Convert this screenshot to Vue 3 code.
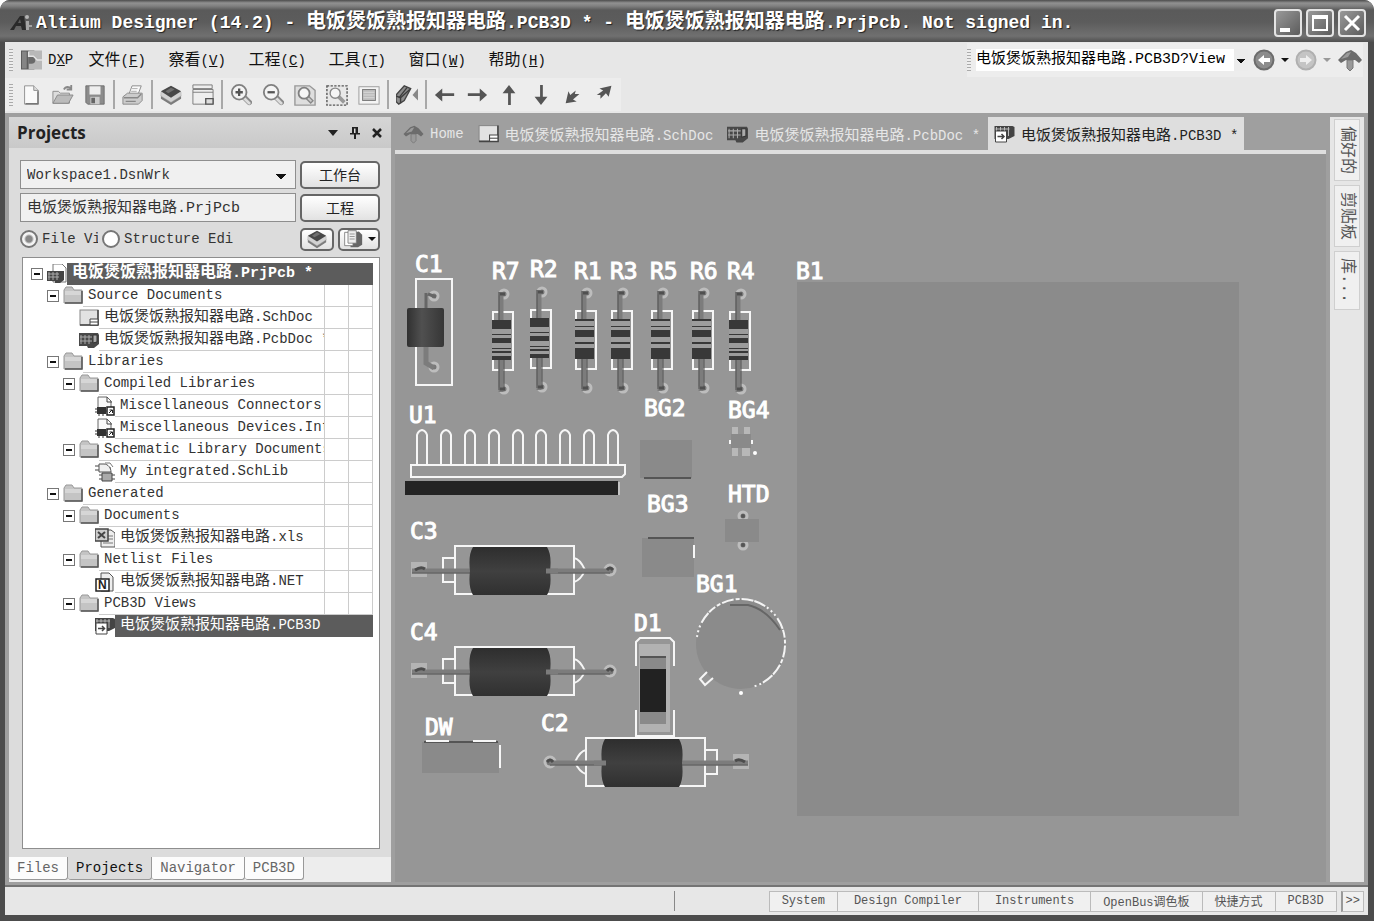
<template>
  <div class="app-window">
    <svg class="symbols" aria-hidden="true">
      <symbol id="i-new" viewBox="0 0 24 24"><path d="M5 2h10l5 5v15H5z" fill="#fafafa" stroke="#8c8c8c" /><path d="M15 2v5h5" fill="#ddd" stroke="#8c8c8c" /><path d="M19.500 8v13.500H6" stroke="#777" fill="none" stroke-width="1.500" /></symbol>
      <symbol id="i-open" viewBox="0 0 24 24"><path d="M1 21V8h6l2 2h10v11z" fill="#ddd" stroke="#8a8a8a" /><path d="M1 21l5-9h17l-5 9z" fill="#bbb" stroke="#888" /><path d="M13 6c2-4 6-3 8-1M21 1v5h-5" fill="none" stroke="#888" stroke-width="2" /></symbol>
      <symbol id="i-save" viewBox="0 0 24 24"><path d="M2 2h20v20H4l-2-2z" fill="#8c8c8c" stroke="#6e6e6e" /><rect x="6" y="2.500" width="12" height="9" fill="#eee" /><rect x="7" y="14" width="10" height="8" fill="#ccc" /><rect x="8" y="15" width="4" height="6" fill="#666" /></symbol>
      <symbol id="i-print" viewBox="0 0 24 24"><path d="M8 10l3-8h10l-3 8" fill="#fafafa" stroke="#888" /><path d="M1 14l5-4h16v8l-4 4H1z" fill="#ccc" stroke="#888" /><path d="M2 15h15l4-4M4 19h11" fill="none" stroke="#888" stroke-width="1.500" /><path d="M11 5h6M10 8h6" stroke="#aaa" /></symbol>
      <symbol id="i-layers" viewBox="0 0 24 24"><path d="M1 12l11 7 11-7v4l-11 7-11-7z" fill="#7c7c7c" /><path d="M1 9l11-6 11 6v4l-11 7-11-7z" fill="#d2d2d2" stroke="#aaa" stroke-width=".5" /><path d="M1 8l11-6 11 6-11 7z" fill="#484848" /><path d="M6 8l6-4 4 2-7 4z" fill="#707070" /></symbol>
      <symbol id="i-sheet" viewBox="0 0 24 24"><path d="M1 1h21v4H1zM1 6h22v16H1z" fill="#eee" stroke="#777" /><path d="M1 9h22" stroke="#777" /><path d="M15 16h8v6h-8z" fill="#ddd" stroke="#555" stroke-width="1.500" /></symbol>
      <symbol id="i-zoomin" viewBox="0 0 24 24"><path d="M15 14l6 6" stroke="#8a8a8a" stroke-width="6" stroke-linecap="round" /><path d="M15 15l6 6" stroke="#ddd" stroke-width="3" stroke-linecap="round" /><circle cx="10" cy="9" r="8" fill="#f4f4f4" stroke="#808080" stroke-width="2" /><path d="M6 9h8M10 5v8" stroke="#555" stroke-width="2.500" /></symbol>
      <symbol id="i-zoomout" viewBox="0 0 24 24"><path d="M15 14l6 6" stroke="#8a8a8a" stroke-width="6" stroke-linecap="round" /><path d="M15 15l6 6" stroke="#ddd" stroke-width="3" stroke-linecap="round" /><circle cx="10" cy="9" r="8" fill="#f4f4f4" stroke="#808080" stroke-width="2" /><path d="M6 9h8" stroke="#555" stroke-width="2.500" /></symbol>
      <symbol id="i-zoomdoc" viewBox="0 0 24 24"><path d="M1 2h16l6 5v16H1z" fill="#dedede" stroke="#999" stroke-width="1.500" /><path d="M14 14l6 6" stroke="#888" stroke-width="5" /><path d="M15 15l4 4" stroke="#ccc" stroke-width="2" /><circle cx="11" cy="10" r="6" fill="#f6f6f6" stroke="#808080" stroke-width="2" /></symbol>
      <symbol id="i-zoomarea" viewBox="0 0 24 24"><rect x="1" y="2" width="22" height="21" fill="#e8e8e8" stroke="#555" stroke-width="1.500" stroke-dasharray="2.500 1.500" /><path d="M13 13l7 7" stroke="#999" stroke-width="4" /><circle cx="10" cy="10" r="5.500" fill="#f6f6f6" stroke="#888" stroke-width="1.500" /></symbol>
      <symbol id="i-fit" viewBox="0 0 24 24"><rect x="1" y="3" width="22" height="19" fill="#f4f4f4" stroke="#999" /><rect x="5" y="6" width="14" height="12" fill="#bbb" stroke="#777" /><path d="M6 9h12M6 12h12M6 15h12" stroke="#ddd" /></symbol>
      <symbol id="i-flip" viewBox="0 0 24 24"><path d="M0 12L9 2l7 3-7 13-6 4-3-3z" fill="#8c8c8c" stroke="#444" stroke-width="1.500" /><path d="M4 14l8-10M0 13l5 2v6M5 15l10-9" fill="none" stroke="#3c3c3c" stroke-width="1.500" /><path d="M24 5v13l-6-6z" fill="#888" /></symbol>
      <symbol id="i-left" viewBox="0 0 24 24"><path d="M1 12l8-7v5h13v3H9v6z" fill="#555" /></symbol>
      <symbol id="i-right" viewBox="0 0 24 24"><path d="M23 12l-8-7v5H2v3h13v6z" fill="#555" /></symbol>
      <symbol id="i-up" viewBox="0 0 24 24"><path d="M12 1l7 9h-5v13h-3V10H5z" fill="#555" /></symbol>
      <symbol id="i-down" viewBox="0 0 24 24"><path d="M12 23l7-9h-5V1h-3v13H5z" fill="#555" /></symbol>
      <symbol id="i-sw" viewBox="0 0 24 24"><path d="M4 21l3-13 2 4 6-5-1 4h5l-7 6 4 2z" fill="#555" /></symbol>
      <symbol id="i-ne" viewBox="0 0 24 24"><path d="M19 2l-3 12-3-4-6 6v-4H3l7-5-4-2z" fill="#555" /></symbol>
      <symbol id="i-home" viewBox="0 0 24 24"><path d="M9 12h6v8l-3 3-3-3z" fill="#999" stroke="#777" /><path d="M0 12l8-8 5-2 5 3 6 7-3 3-4-3H8l-5 3z" fill="#6c6c6c" /><path d="M3 11l6-6 4-1-3 5z" fill="#9a9a9a" /></symbol>
      <symbol id="i-folder" viewBox="0 0 20 20"><path d="M1 4l2-3h6l2 3h8v13H1z" fill="#c4c4c4" stroke="#999" /><path d="M19 5v12H2" fill="none" stroke="#555" stroke-width="1.500" /><path d="M2 5h16v4H2z" fill="#d6d6d6" /></symbol>
      <symbol id="i-sch" viewBox="0 0 20 18"><rect x="1" y="1" width="18" height="15" fill="#e2e2e2" stroke="#888" /><path d="M19 1v15H1" fill="none" stroke="#444" stroke-width="1.500" /><path d="M11 10h8v6h-8z" fill="#fff" stroke="#444" /><path d="M11 13h8" stroke="#444" /></symbol>
      <symbol id="i-pcb" viewBox="0 0 20 18"><path d="M0 2h19l1 2v9l-5 4H9l-1-2H0z" fill="#484848" /><path d="M2 4v9M6 4v9M10 4v9M1 6h12M1 10h12" stroke="#aaa" /><path d="M14 4v8l4-1V4z" fill="#aaa" stroke="#333" /></symbol>
      <symbol id="i-prj" viewBox="0 0 20 20"><path d="M6 0h9l4 4v14H6z" fill="#fff" stroke="#777" /><path d="M0 7h17v9l-4 3H8v-2H0z" fill="#444" /><path d="M2 8v8M6 8v8M10 8v8M1 10h11M1 13h11" stroke="#aaa" /></symbol>
      <symbol id="i-lib" viewBox="0 0 20 20"><path d="M3 1h9l4 4v10H3z" fill="#fafafa" stroke="#666" /><path d="M12 1v5h5" fill="none" stroke="#444" /><path d="M2 11h9v7H2z" fill="#333" /><path d="M0 13h2M0 16h2M4 20v-2M8 20v-2" stroke="#333" /><path d="M12 11h7v8h-7z" fill="#fff" stroke="#222" stroke-width="1.500" /><path d="M14 17l3-3m-2.500 0h3v3" stroke="#222" fill="none" /></symbol>
      <symbol id="i-schlib" viewBox="0 0 20 20"><path d="M0 4h4M0 8h4M12 6h4" stroke="#444" /><path d="M4 2h5c4 0 7 4 7 8H4z" fill="#f0f0f0" stroke="#555" /><path d="M10 1h5l3 4" fill="none" stroke="#777" /><path d="M7 11h10v8H7z" fill="#aaa" stroke="#444" /><path d="M4 13h3M4 17h3M17 13h3M17 17h3" stroke="#444" /></symbol>
      <symbol id="i-xls" viewBox="0 0 20 20"><path d="M6 2h10l4 3v14H6z" fill="#eee" stroke="#555" /><path d="M13 8h5M13 11h5M8 15h10" stroke="#777" /><rect x="0" y="1" width="13" height="12" fill="#ccc" stroke="#444" stroke-width="1.500" /><path d="M3 4l7 6M10 4l-7 6" stroke="#444" stroke-width="2" /></symbol>
      <symbol id="i-net" viewBox="0 0 20 20"><path d="M6 1h8l4 4v14H6z" fill="#eee" stroke="#555" /><rect x="1" y="7" width="13" height="12" fill="#fff" stroke="#222" stroke-width="1.500" /><text x="3" y="17" font-size="12" font-weight="bold" font-family="Liberation Sans, sans-serif" fill="#222">N</text></symbol>
      <symbol id="i-pcb3d" viewBox="0 0 20 20"><path d="M0 2h18l2 1v9l-6 3H0z" fill="#444" /><path d="M2 3v5M6 3v5M10 3v5M14 3v9M1 5h14" stroke="#bbb" /><path d="M1 7h11v11H1z" fill="#fff" stroke="#444" /><path d="M3 12.500h6M7 10l2.500 2.500L7 15" fill="none" stroke="#444" stroke-width="1.500" /></symbol>
      <symbol id="i-copy" viewBox="0 0 24 24"><path d="M9 5l10-2 4 4v12l-5 3H9z" fill="#666" /><path d="M2 4h10v16H2z" fill="#fff" stroke="#777" /><path d="M6 2h10v15H6z" fill="#eee" stroke="#777" /><path d="M8 6h6M8 9h6M8 12h6" stroke="#888" /></symbol>
    </svg>

    <header class="title-bar">
      <svg class="logo" viewBox="0 0 22 20" aria-hidden="true">
        <path d="M0 17L10 3h4l2 14h-4l-1-4H6l-2 4zM8 10h3l-1-4z" fill="#2a2a2a" fill-rule="evenodd" />
        <circle cx="17" cy="4" r="2" fill="#b4b4b4" />
        <path d="M16 8h3v9h-3zM19 12h3v2h-3z" fill="#a4a4a4" />
      </svg>
      <h1>Altium Designer (14.2) - <span class="cjk">{{ name }}</span>.PCB3D * - <span class="cjk">{{ name }}</span>.PrjPcb. Not signed in.</h1>
      <button class="win-btn" aria-label="Minimize"><svg viewBox="0 0 24 24"><path d="M4 17h10v4H4z" fill="#fff" /></svg></button>
      <button class="win-btn" aria-label="Maximize"><svg viewBox="0 0 24 24"><path d="M4 4h16v16H4zM6 8v10h12V8z" fill="#fff" fill-rule="evenodd" /></svg></button>
      <button class="win-btn" aria-label="Close"><svg viewBox="0 0 24 24"><path d="M5 5l14 14M19 5L5 19" stroke="#fff" stroke-width="3" /></svg></button>
    </header>

    <nav class="menu-bar">
      <span class="grip"></span>
      <button class="dxp">
        <svg viewBox="0 0 22 22" aria-hidden="true"><path d="M0 1h14v20H0z" fill="#5c5c5c" /><path d="M8 1h14v20H8z" fill="#b8b8b8" /><path d="M8 7h3a4 4 0 010 8H8z" fill="#6a6a6a" /><path d="M8 2v5h5l4 4h5" fill="none" stroke="#e4e4e4" stroke-width="1.500" /><path d="M1 2h5v18H1z" fill="#858585" /></svg>
        <span>D<u>X</u>P</span>
      </button>
      <button v-for="m in menus" :key="m.key" class="menu-item"><span class="cjk">{{ m.label }}</span>(<u>{{ m.key }}</u>)</button>
      <div class="address">
        <span class="grip"></span>
        <select aria-label="Address">
          <option>{{ name }}.PCB3D?View</option>
        </select>
        <button class="round" aria-label="Back"><svg viewBox="0 0 22 22"><circle cx="11" cy="11" r="9.500" fill="#8c8c8c" stroke="#6c6c6c" stroke-width="2" /><path d="M5 11l6-5v3h6v4h-6v3z" fill="#fff" /></svg></button>
        <button class="drop" aria-label="Back history"></button>
        <button class="round" aria-label="Forward"><svg viewBox="0 0 22 22"><circle cx="11" cy="11" r="9.500" fill="#c4c4c4" stroke="#b0b0b0" stroke-width="2" /><path d="M17 11l-6-5v3H5v4h6v3z" fill="#eee" /></svg></button>
        <button class="drop faded" aria-label="Forward history"></button>
        <button class="home" aria-label="Home page"><svg><use href="#i-home" /></svg></button>
      </div>
    </nav>

    <div class="tool-row">
      <div class="tool-bar">
        <span class="grip"></span>
        <template v-for="(group, i) in tools" :key="i">
          <span v-if="i" class="sep"></span>
          <button v-for="t in group" :key="t" class="tool" :aria-label="t"><svg><use :href="'#i-' + t" /></svg></button>
        </template>
      </div>
    </div>

    <main class="workspace">
      <aside class="panel">
        <header class="panel-head">
          <h2>Projects</h2>
          <button aria-label="Panel menu"><svg viewBox="0 0 12 12"><path d="M1 3h10L6 9z" fill="#222" /></svg></button>
          <button aria-label="Pin"><svg viewBox="0 0 12 12"><path d="M3 0h6v6h2v1.500H7V12H5V7.500H1V6h2z" fill="#222" /><path d="M5 1.500h1.500V6H5z" fill="#ddd" /></svg></button>
          <button aria-label="Close panel"><svg viewBox="0 0 12 12"><path d="M2 2l8 8M10 2l-8 8" stroke="#222" stroke-width="2.500" /></svg></button>
        </header>
        <div class="panel-body">
          <div class="form-row">
            <select class="field" aria-label="Workspace"><option>Workspace1.DsnWrk</option></select>
            <button class="xp-btn">工作台</button>
          </div>
          <div class="form-row">
            <input class="field project" aria-label="Project" :value="name + '.PrjPcb'" />
            <button class="xp-btn">工程</button>
          </div>
          <div class="form-row view-row">
            <label class="radio first"><input v-model="view" type="radio" name="view" value="file" /><span>File View</span></label>
            <label class="radio"><input v-model="view" type="radio" name="view" value="structure" /><span>Structure Edi</span></label>
            <button class="xp-btn small" aria-label="Layers"><svg><use href="#i-layers" /></svg></button>
            <button class="xp-btn small wide" aria-label="Documents"><svg><use href="#i-copy" /></svg><i class="arrow"></i></button>
          </div>
          <ul class="tree">
            <li v-for="(n, i) in tree" :key="i" :class="['depth-' + n.depth, { selected: n.selected, root: n.depth === 0 }]">
              <button v-if="n.open" class="toggle" aria-label="Collapse"></button>
              <span v-else class="no-toggle"></span>
              <svg class="node-icon"><use :href="'#i-' + n.icon" /></svg>
              <span class="node-text"><span v-if="n.doc" class="cjk">{{ name }}</span>{{ n.text }}</span>
              <span class="cell"></span>
              <span class="cell"></span>
            </li>
          </ul>
        </div>
        <nav class="panel-tabs">
          <button v-for="t in panelTabs" :key="t" :class="{ active: t === 'Projects' }">{{ t }}</button>
        </nav>
      </aside>

      <section class="editor">
        <nav class="doc-tabs">
          <button v-for="t in docTabs" :key="t.text" :class="{ active: t.active }">
            <svg><use :href="'#i-' + t.icon" /></svg>
            <span><span v-if="t.doc" class="cjk">{{ name }}</span>{{ t.text }}</span>
          </button>
        </nav>
        <svg class="board">
          <defs>
            <linearGradient id="can" x1="0" y1="0" x2="0" y2="1">
              <stop offset="0" stop-color="#2e2e2e" /><stop offset=".5" stop-color="#404040" /><stop offset="1" stop-color="#303030" />
            </linearGradient>
            <linearGradient id="canV" x1="0" y1="0" x2="1" y2="0">
              <stop offset="0" stop-color="#303030" /><stop offset=".4" stop-color="#505050" /><stop offset="1" stop-color="#363636" />
            </linearGradient>
          </defs>
          <g transform="translate(-395 -154)">
            <rect x="797" y="282" width="442" height="534" fill="#8b8b8b" />

            <!-- C1 -->
            <rect class="silk" x="416" y="279" width="36" height="106" />
            <circle class="pad" cx="434" cy="296" r="4" /><circle class="pad" cx="434" cy="367" r="4" />
            <path class="lead" d="M426 345v18l8 5" />
            <path d="M436 297l-8-3M426 293v16" stroke="#666" stroke-width="3" />
            <rect x="407" y="308" width="37" height="39" rx="2" fill="url(#canV)" />

            <!-- resistors -->
            <g v-for="r in resistors" :key="r.id" :transform="`translate(${r.x} ${r.y})`">
              <rect class="silk" x="1" y="0" width="20" height="58" />
              <circle class="pad" cx="12" cy="-18" r="4" /><circle class="pad" cx="12" cy="77" r="4" />
              <path class="lead" d="M9-20V8M9 46v34" stroke-width="6" />
              <path d="M7-20V8M7 48v30M12 48v30" stroke="#505050" />
              <path d="M8-18l5 0M8 77l5 0" stroke="#505050" stroke-width="3" />
              <rect x="0" y="8" width="19" height="40" fill="#383838" />
              <g v-if="r.flip" fill="#9c9c9c"><rect y="17" width="19" height="5" /><rect y="23" width="19" height="3" /><rect y="31" width="19" height="5" /><rect y="37" width="19" height="2" /><rect y="41" width="19" height="3" /></g>
              <g v-else fill="#9c9c9c"><rect y="10" width="19" height="5" /><rect y="16" width="19" height="3" /><rect y="26" width="19" height="5" /><rect y="33" width="19" height="4" /></g>
            </g>

            <!-- U1 -->
            <path v-for="x in pins" :key="x" class="silk" :d="`M${x - 5} 465v-30q1-4 5-5q4 1 5 5v30`" />
            <path class="silk" d="M411 465h214v9l-3 3H411z" />
            <rect x="405" y="481" width="213" height="14" fill="#242424" />
            <path d="M619 482v13" stroke="#c4c4c4" stroke-width="2" />

            <!-- axial capacitors -->
            <g v-for="c in caps" :key="c.id" :transform="c.at">
              <rect class="silk" x="0" y="0" width="119" height="48" />
              <path class="silk" d="M0 12h-12v24H0M119 12q6 1 11 12q-4 10-11 12" />
              <rect x="-44" y="16" width="16" height="15" fill="#b4b4b4" />
              <circle class="pad" cx="155" cy="24" r="5" />
              <path class="lead" d="M-43 25H30M90 25h65" />
              <path d="M-43 27H30M90 27h65" stroke="#5c5c5c" />
              <path d="M-40 24q6-4 10-1M152 24q3-4 6 0" fill="none" stroke="#4c4c4c" stroke-width="3" />
              <g :transform="`translate(${c.body} 0)`">
                <path d="M4 1h74q5 8 3 24q2 16-3 24H4q-5-8-3-24q-2-16 3-24z" fill="url(#can)" transform="translate(14 0)" />
                <path class="lead" d="M91 25h12" />
              </g>
            </g>

            <!-- D1 -->
            <path class="silk" d="M636 666v-24l4-4h30l4 4v24M636 710v26h38v-26" />
            <rect x="639" y="644" width="31" height="88" fill="#b2b2b2" />
            <rect x="640" y="656" width="26" height="68" fill="#8a8a8a" />
            <path d="M640 657h26" stroke="#555" stroke-width="2" />
            <rect x="640" y="669" width="26" height="43" fill="#222" />

            <!-- transistors, thermistor and pot -->
            <rect class="chip" x="640" y="440" width="52" height="38" /><path d="M644 478h47" stroke="#555" stroke-width="2" />
            <rect class="chip" x="642" y="538" width="52" height="39" /><path d="M648 538h46" stroke="#555" stroke-width="2" /><path class="silk" d="M694 545v13" />
            <path d="M732 427h6v7h-6zM744 427h6v7h-6zM732 448h6v8h-6zM742 448h8v8h-8z" fill="#b8b8b8" />
            <rect class="chip" x="731" y="434" width="20" height="14" /><path class="silk" d="M730 440v4M752 440v4" />
            <circle cx="755" cy="453" r="2" fill="#fff" />
            <circle class="pad" cx="743" cy="516" r="4" /><circle class="pad" cx="743" cy="545" r="4" />
            <circle cx="743" cy="516" r="2" fill="#555" /><circle cx="743" cy="545" r="2" fill="#555" />
            <rect class="chip" x="725" y="519" width="34" height="23" />
            <circle cx="741" cy="644" r="45" fill="#8b8b8b" />
            <path d="M730 605h18q18 4 32 25" fill="none" stroke="#666" stroke-width="2" />
            <path d="M697 637A44 44 0 01741 599A44 44 0 01785 643A44 44 0 01752 687" fill="none" stroke="#f4f4f4" stroke-width="2" stroke-dasharray="2 3 2 3 2 3 12 1 8 2 4 2 12 2 4 2 12 1 12 2" />
            <path class="silk" d="M707 672l-7 7 5 6 8-7" />
            <circle cx="741" cy="693" r="2" fill="#fff" />
            <rect class="chip" x="422" y="742" width="77" height="31" />
            <path d="M424 742h74" stroke="#555" stroke-width="2" /><path class="silk" d="M426 741h23M473 741h23M500 745v23" />

            <text v-for="l in labels" :key="l.t" :x="l.x" :y="l.y">{{ l.t }}</text>
          </g>
        </svg>
      </section>

      <nav class="side-tabs">
        <button>偏好的</button>
        <button>剪贴板</button>
        <button>库...</button>
      </nav>
    </main>

    <footer class="status-bar">
      <span class="divider"></span>
      <div class="status-btns">
        <button v-for="s in statusItems" :key="s.text" :class="{ wide: s.wide }">{{ s.text }}</button>
      </div>
      <button class="more">&gt;&gt;</button>
    </footer>
  </div>
</template>

<script setup>
import { ref } from 'vue'

const name = '电饭煲饭熟报知器电路'
const view = ref('file')

const menus = [
  { label: '文件', key: 'F' },
  { label: '察看', key: 'V' },
  { label: '工程', key: 'C' },
  { label: '工具', key: 'T' },
  { label: '窗口', key: 'W' },
  { label: '帮助', key: 'H' }
]

const tools = [
  ['new', 'open', 'save'],
  ['print'],
  ['layers', 'sheet'],
  ['zoomin', 'zoomout', 'zoomdoc', 'zoomarea', 'fit'],
  ['flip'],
  ['left', 'right', 'up', 'down', 'sw', 'ne']
]

const panelTabs = ['Files', 'Projects', 'Navigator', 'PCB3D']

const docTabs = [
  { icon: 'home', text: 'Home' },
  { icon: 'sch', doc: true, text: '.SchDoc' },
  { icon: 'pcb', doc: true, text: '.PcbDoc *' },
  { icon: 'pcb3d', doc: true, text: '.PCB3D *', active: true }
]

const tree = [
  { depth: 0, open: true, icon: 'prj', doc: true, text: '.PrjPcb *', selected: true },
  { depth: 1, open: true, icon: 'folder', text: 'Source Documents' },
  { depth: 2, icon: 'sch', doc: true, text: '.SchDoc' },
  { depth: 2, icon: 'pcb', doc: true, text: '.PcbDoc *' },
  { depth: 1, open: true, icon: 'folder', text: 'Libraries' },
  { depth: 2, open: true, icon: 'folder', text: 'Compiled Libraries' },
  { depth: 3, icon: 'lib', text: 'Miscellaneous Connectors.IntLib' },
  { depth: 3, icon: 'lib', text: 'Miscellaneous Devices.IntLib' },
  { depth: 2, open: true, icon: 'folder', text: 'Schematic Library Documents' },
  { depth: 3, icon: 'schlib', text: 'My integrated.SchLib' },
  { depth: 1, open: true, icon: 'folder', text: 'Generated' },
  { depth: 2, open: true, icon: 'folder', text: 'Documents' },
  { depth: 3, icon: 'xls', doc: true, text: '.xls' },
  { depth: 2, open: true, icon: 'folder', text: 'Netlist Files' },
  { depth: 3, icon: 'net', doc: true, text: '.NET' },
  { depth: 2, open: true, icon: 'folder', text: 'PCB3D Views' },
  { depth: 3, icon: 'pcb3d', doc: true, text: '.PCB3D', selected: true }
]

const statusItems = [
  { text: 'System' },
  { text: 'Design Compiler', wide: true },
  { text: 'Instruments', wide: true },
  { text: 'OpenBus调色板' },
  { text: '快捷方式' },
  { text: 'PCB3D' }
]

const resistors = [
  { id: 'R7', x: 492, y: 312, flip: true },
  { id: 'R2', x: 530, y: 310, flip: true },
  { id: 'R1', x: 575, y: 311 },
  { id: 'R3', x: 611, y: 311 },
  { id: 'R5', x: 651, y: 311 },
  { id: 'R6', x: 692, y: 311 },
  { id: 'R4', x: 729, y: 312, flip: true }
]

const pins = [422, 446, 470, 494, 518, 541, 565, 589, 613]

// body is how far the can sits from its usual place along the lead
const caps = [
  { id: 'C3', at: 'translate(455 546)', body: 0 },
  { id: 'C4', at: 'translate(455 647)', body: 0 },
  { id: 'C2', at: 'translate(705 738) scale(-1 1)', body: 8 }
]

const labels = [
  { t: 'C1', x: 415, y: 272 },
  { t: 'R7', x: 492, y: 279 },
  { t: 'R2', x: 530, y: 277 },
  { t: 'R1', x: 574, y: 279 },
  { t: 'R3', x: 610, y: 279 },
  { t: 'R5', x: 650, y: 279 },
  { t: 'R6', x: 690, y: 279 },
  { t: 'R4', x: 727, y: 279 },
  { t: 'B1', x: 796, y: 279 },
  { t: 'U1', x: 409, y: 423 },
  { t: 'BG2', x: 644, y: 416 },
  { t: 'BG4', x: 728, y: 418 },
  { t: 'BG3', x: 647, y: 512 },
  { t: 'HTD', x: 728, y: 502 },
  { t: 'C3', x: 410, y: 539 },
  { t: 'BG1', x: 696, y: 592 },
  { t: 'C4', x: 410, y: 640 },
  { t: 'D1', x: 634, y: 631 },
  { t: 'DW', x: 425, y: 735 },
  { t: 'C2', x: 541, y: 731 }
]
</script>

<style>
body {
  margin: 0;
  background: #fff;
}
</style>

<style scoped>
.app-window {
  display: flex;
  flex-direction: column;
  min-height: 100vh;
  box-sizing: border-box;
  padding: 0 6px 6px 5px;
  background: #4c4c4c;
  border-radius: 10px 10px 0 0;
  overflow: hidden;
  font-family: "Liberation Mono", "Noto Sans CJK SC", monospace;
  font-size: 14px;
  color: #333;
}

button {
  font: inherit;
  color: inherit;
  border: 0;
  padding: 0;
  margin: 0;
  background: none;
  white-space: pre;
}

svg {
  display: block;
}

.symbols {
  position: absolute;
  width: 0;
  height: 0;
}

.title-bar {
  display: flex;
  align-items: center;
  gap: 4px;
  height: 42px;
  margin: 0 -6px 0 -5px;
  padding: 4px 8px 0 10px;
  box-sizing: border-box;
  background: linear-gradient(#4c4c4c 0, #919191 3px, #808080 6px, #5a5a5a 10px, #5c5c5c 22px, #707070 36px, #505050 42px);
}

.logo {
  width: 22px;
  height: 20px;
}

.title-bar h1 {
  flex: 1;
  margin: 0;
  font-size: 18px;
  line-height: 30px;
  color: #fff;
  text-shadow: 1px 1px 1px #222;
  white-space: pre;
  overflow: hidden;
}

.title-bar h1 .cjk {
  font-size: 20px;
  line-height: 20px;
}

.win-btn {
  width: 28px;
  height: 28px;
  box-sizing: border-box;
  border: 2px solid #e4e4e4;
  border-radius: 4px;
  background: linear-gradient(135deg, #999, #5c5c5c);
}

.win-btn svg {
  width: 24px;
  height: 24px;
}

.menu-bar {
  display: flex;
  align-items: center;
  height: 36px;
  padding: 0 5px 0 4px;
  background: #e7e7e7;
}

.grip {
  width: 4px;
  height: 22px;
  background: repeating-linear-gradient(#aaa 0 1px, #eee 1px 3px);
}

.dxp {
  display: flex;
  align-items: center;
  gap: 6px;
  padding: 0 4px 0 8px;
  color: #111;
}

.dxp svg {
  width: 21px;
  height: 22px;
}

.menu-item {
  width: 80px;
  height: 30px;
  padding-bottom: 4px;
  color: #111;
}

.menu-item .cjk {
  font-size: 16px;
}

.address {
  display: flex;
  align-items: center;
  margin-left: auto;
  height: 34px;
  background: #ededed;
}

.address select {
  width: 272px;
  height: 22px;
  margin: 0 5px;
  padding: 0 14px 0 0;
  border: 0;
  border-radius: 0;
  appearance: none;
  font-family: inherit;
  font-size: 15px;
  line-height: 22px;
  color: #000;
  background: linear-gradient(#111, #111) no-repeat right 3px top 10px / 8px 1px, linear-gradient(#111, #111) no-repeat right 4px top 11px / 6px 1px, linear-gradient(#111, #111) no-repeat right 5px top 12px / 4px 1px, linear-gradient(#111, #111) no-repeat right 6px top 13px / 2px 1px, linear-gradient(to left, #ececec 14px, #fff 14px);
}

.round svg {
  width: 22px;
  height: 22px;
}

.home svg {
  width: 26px;
  height: 24px;
}

.drop {
  width: 20px;
  height: 22px;
}

.drop::before,
.arrow {
  content: "";
  display: block;
  width: 0;
  margin: 0 auto;
  border: 4px solid transparent;
  border-top-color: #111;
  border-bottom: 0;
}

.drop.faded::before {
  border-top-color: #999;
}

.tool-row {
  display: flex;
  height: 35px;
  background: #e7e7e7;
}

.tool-bar {
  display: flex;
  align-items: center;
  height: 33px;
  padding-left: 4px;
  background: #ededed;
}

.tool-bar .grip {
  margin-right: 2px;
}

.tool {
  width: 32px;
  height: 32px;
}

.tool svg {
  width: 22px;
  height: 22px;
  margin: 0 auto;
}

.sep {
  width: 2px;
  height: 29px;
  margin: 0 2px;
  background: #a8a8a8;
}

.workspace {
  flex: 1;
  display: flex;
  padding: 4px 4px 3px;
  background: #9f9f9f;
}

.panel {
  display: flex;
  flex-direction: column;
  width: 382px;
  flex: none;
  margin-right: 4px;
  background: #dcdcdc;
}

.panel-head {
  display: flex;
  align-items: center;
  gap: 10px;
  height: 31px;
  padding: 0 8px;
  background: linear-gradient(#d6d6d6, #c9c9c9);
}

.panel-head h2 {
  flex: 1;
  margin: 0;
  font: bold 17px "Open Sans", sans-serif;
  color: #222;
}

.panel-head svg {
  width: 12px;
  height: 12px;
}

.panel-body {
  flex: 1;
  display: flex;
  flex-direction: column;
  gap: 4px;
  padding: 12px 11px 8px;
}

.form-row {
  display: flex;
  align-items: center;
  gap: 4px;
}

.field {
  flex: 1;
  min-width: 0;
  height: 29px;
  box-sizing: border-box;
  padding: 0 6px;
  border: 1px solid #8e8e8e;
  border-radius: 0;
  appearance: none;
  background: #f0f0f0;
  font-family: inherit;
  font-size: 14px;
  color: #333;
}

select.field {
  background: linear-gradient(#111, #111) no-repeat right 9px top 13px / 10px 1px, linear-gradient(#111, #111) no-repeat right 10px top 14px / 8px 1px, linear-gradient(#111, #111) no-repeat right 11px top 15px / 6px 1px, linear-gradient(#111, #111) no-repeat right 12px top 16px / 4px 1px, linear-gradient(#111, #111) no-repeat right 13px top 17px / 2px 1px, #f0f0f0;
}

.field.project {
  font-size: 15px;
  padding-bottom: 4px;
}

.xp-btn {
  display: flex;
  align-items: center;
  justify-content: center;
  width: 80px;
  height: 28px;
  box-sizing: border-box;
  padding-bottom: 2px;
  border: 2px solid #666;
  border-radius: 5px;
  background: linear-gradient(#fff, #e2e2e2);
  color: #222;
}

.xp-btn.small {
  width: 34px;
  height: 23px;
  padding-bottom: 0;
}

.xp-btn.small.wide {
  width: 42px;
}

.xp-btn.small svg {
  width: 22px;
  height: 20px;
}

.arrow {
  margin: 0 0 0 4px;
}

.view-row {
  height: 26px;
}

.radio {
  flex: 1;
  display: flex;
  align-items: center;
  gap: 4px;
  white-space: pre;
  overflow: hidden;
}

.radio.first {
  flex: none;
  width: 78px;
}

.radio input {
  appearance: none;
  flex: none;
  width: 18px;
  height: 18px;
  margin: 0;
  border: 2px solid #777;
  border-radius: 50%;
  background: #fff;
}

.radio input:checked {
  background: radial-gradient(circle, #888 0 3px, #f4f4f4 5px);
}

.tree {
  flex: 1;
  margin: 1px 0 0 2px;
  padding: 5px 6px 5px 8px;
  list-style: none;
  border: 1px solid #8e8e8e;
  background: #fff;
}

.tree li {
  display: flex;
  align-items: center;
  height: 22px;
}

.depth-1 {
  padding-left: 16px;
}

.depth-2 {
  padding-left: 32px;
}

.depth-3 {
  padding-left: 48px;
}

.toggle,
.no-toggle {
  flex: none;
  width: 12px;
  height: 12px;
  margin-right: 4px;
  box-sizing: border-box;
}

.toggle {
  border: 1px solid #777;
  background: linear-gradient(#111, #111) no-repeat center / 6px 2px, #fff;
}

.node-icon {
  flex: none;
  width: 20px;
  height: 20px;
}

.node-text {
  flex: 1;
  min-width: 0;
  padding-left: 5px;
  line-height: 21px;
  height: 21px;
  white-space: pre;
  overflow: hidden;
  border-bottom: 1px solid #ccc;
}

.node-text .cjk,
.doc-tabs .cjk {
  font-size: 15px;
}

.cell {
  flex: none;
  width: 23px;
  height: 21px;
  border-left: 1px solid #ccc;
  border-bottom: 1px solid #ccc;
}

.cell:last-child {
  border-right: 1px solid #ccc;
}

.selected .node-text,
.selected .cell {
  background: #5c5c5c;
  border-color: #5c5c5c;
  color: #fff;
}

.root .node-text {
  font-weight: bold;
  font-size: 15px;
}

.root .node-text .cjk {
  font-size: 16px;
}

.panel-tabs {
  display: flex;
  height: 25px;
  background: #ededed;
}

.panel-tabs button {
  height: 23px;
  padding: 0 8px;
  border-right: 1px solid #999;
  border-bottom: 1px solid #999;
  border-radius: 0 0 3px 3px;
  background: #fcfcfc;
  color: #666;
}

.panel-tabs button.active {
  background: #dcdcdc;
  color: #111;
}

.editor {
  flex: 1;
  min-width: 0;
  display: flex;
  flex-direction: column;
}

.doc-tabs {
  display: flex;
  gap: 2px;
  height: 33px;
  padding-left: 2px;
  border-bottom: 4px solid #dedede;
}

.doc-tabs button {
  display: flex;
  align-items: center;
  gap: 6px;
  padding: 0 6px;
  color: #e6e6e6;
}

.doc-tabs button.active {
  background: #dedede;
  color: #222;
}

.doc-tabs svg {
  width: 21px;
  height: 20px;
}

.board {
  flex: 1;
  width: 100%;
  height: 0;
  min-height: 660px;
  background: #969696;
}

.board text {
  font-family: "DejaVu Sans Mono", monospace;
  font-size: 23px;
  fill: #fff;
  stroke: #fff;
  stroke-width: 1;
}

.silk {
  fill: none;
  stroke: #f6f6f6;
  stroke-width: 2;
}

.pad {
  fill: #777;
  stroke: #bdbdbd;
  stroke-width: 3;
}

.lead {
  fill: none;
  stroke: #7c7c7c;
  stroke-width: 5;
}

.chip {
  fill: #8a8a8a;
}

.side-tabs {
  display: flex;
  flex-direction: column;
  gap: 4px;
  width: 34px;
  flex: none;
  box-sizing: border-box;
  margin-left: 4px;
  padding: 2px 4px;
  background: #e6e6e6;
}

.side-tabs button {
  writing-mode: vertical-rl;
  text-orientation: sideways;
  box-sizing: border-box;
  width: 26px;
  padding: 6px 0;
  border: 1px solid #cfcfcf;
  background: #f0f0f0;
  font-size: 16px;
  line-height: 24px;
  color: #555;
}

.status-bar {
  display: flex;
  align-items: center;
  height: 28px;
  padding-right: 4px;
  border-top: 2px solid #747474;
  background: #e7e7e7;
  font-size: 12px;
  color: #555;
}

.divider {
  width: 1px;
  height: 20px;
  margin-left: auto;
  margin-right: 94px;
  background: #888;
}

.status-btns {
  display: flex;
  margin-right: 4px;
  border-left: 1px solid #bbb;
}

.status-btns button,
.more {
  height: 21px;
  box-sizing: border-box;
  padding: 0 12px;
  border: 1px solid #bbb;
  border-left: 0;
  background: #f0f0f0;
}

.status-btns button.wide {
  padding: 0 16px;
}

.more {
  padding: 0 3px;
  border-left: 2px solid #999;
}
</style>
